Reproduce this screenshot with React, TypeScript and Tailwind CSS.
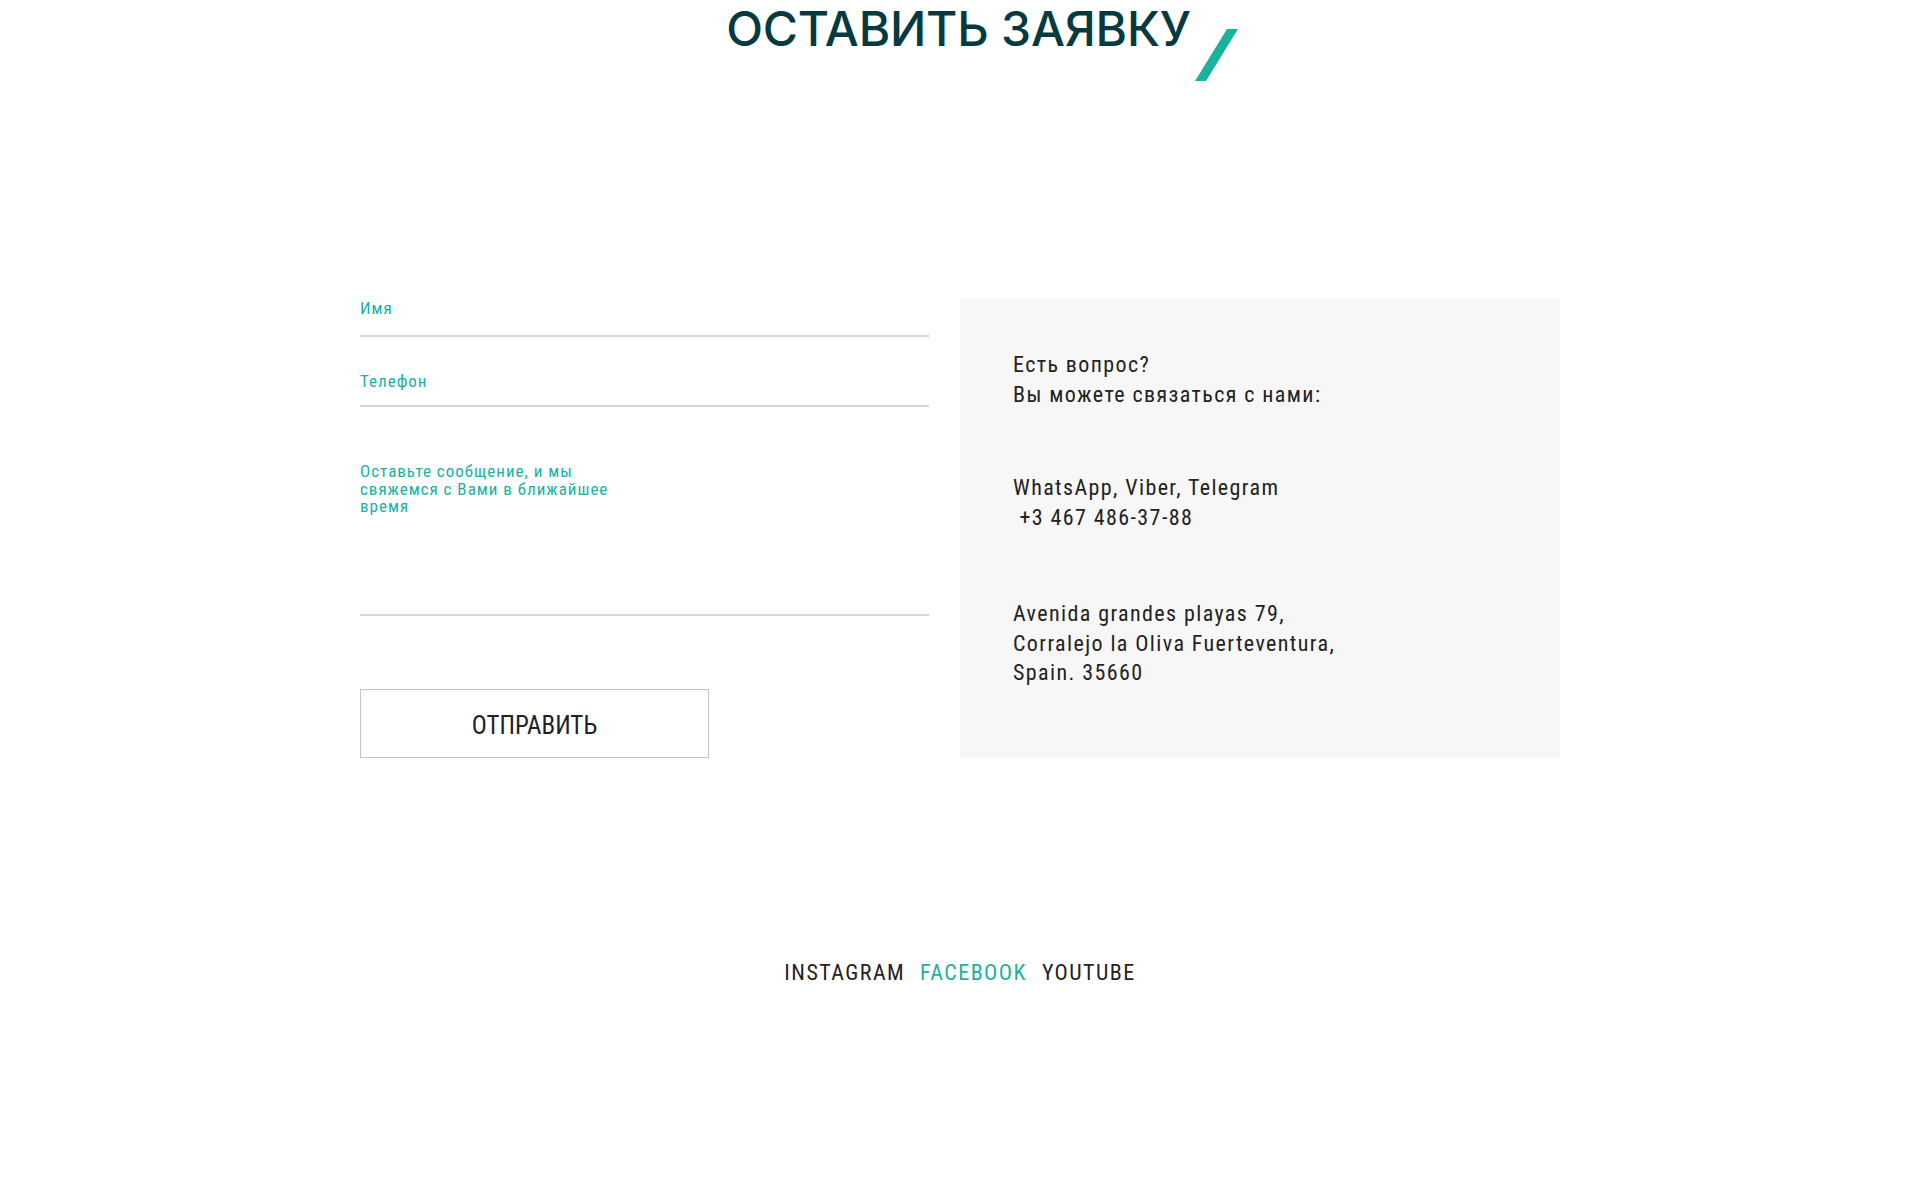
import React from "react";

const cond = { fontFamily: "Roboto, 'Liberation Sans', sans-serif" };

export default function App() {
  return (
    <div className="min-h-[1182px] w-full bg-white">
      {/* Title */}
      <div className="flex justify-center pl-[44px]">
        <div className="flex items-start">
          <h1
            className="text-[48px] leading-[58px] font-medium text-[#053a40] tracking-[-0.2px]"
            style={{ fontFamily: "Inter, 'Open Sans', sans-serif" }}
          >
            ОСТАВИТЬ ЗАЯВКУ
          </h1>
          <svg width="43" height="52" viewBox="0 0 43 52" className="ml-[4px] mt-[29px] shrink-0">
            <polygon points="32,0 43,0 11,52 0,52" fill="#19b29e" />
          </svg>
        </div>
      </div>

      {/* Main */}
      <div className="mx-auto mt-[217px] flex w-[1200px] items-start [font-stretch:condensed]" style={cond}>
        {/* Form */}
        <div className="w-[600px]">
          <div className="w-[569px]">
            <div className="h-[39px] border-b-2 border-[#d6d6d6]">
              <div className="text-[17px] leading-[20px] tracking-[1px] text-[#19b29e]">Имя</div>
            </div>
            <div className="mt-[34px] h-[36px] border-b-2 border-[#d6d6d6]">
              <div className="text-[17px] leading-[20px] tracking-[1px] text-[#19b29e]">Телефон</div>
            </div>
            <div className="mt-[56px] h-[153px] border-b-2 border-[#d6d6d6]">
              <div className="text-[17px] leading-[17.7px] tracking-[1px] text-[#19b29e]">
                Оставьте сообщение, и мы
                <br />
                свяжемся с Вами в ближайшее
                <br />
                время
              </div>
            </div>
            <button className="mt-[73px] flex h-[69px] w-[349px] items-center justify-center border border-[#c4c4c4] bg-white pt-[5px] text-[25px] text-[#222]">
              ОТПРАВИТЬ
            </button>
          </div>
        </div>

        {/* Panel */}
        <div className="mt-[1px] h-[459px] w-[600px] bg-[#f7f7f7] pl-[53px] pt-[51px] text-[22px] leading-[29.5px] tracking-[1.4px] text-[#222]">
          <p>
            Есть вопрос?
            <br />
            Вы можете связаться с нами:
          </p>
          <p className="mt-[64px]">
            WhatsApp, Viber, Telegram
            <br />
            &nbsp;+3 467 486-37-88
          </p>
          <p className="mt-[67px]">
            Avenida grandes playas 79,
            <br />
            Corralejo la Oliva Fuerteventura,
            <br />
            Spain. 35660
          </p>
        </div>
      </div>

      {/* Social */}
      <div
        className="mt-[200px] flex justify-center gap-[15px] text-[22px] leading-[30px] tracking-[1.45px] [font-stretch:condensed]"
        style={cond}
      >
        <a className="text-[#222]">INSTAGRAM</a>
        <a className="text-[#19b29e]">FACEBOOK</a>
        <a className="text-[#222]">YOUTUBE</a>
      </div>
    </div>
  );
}
